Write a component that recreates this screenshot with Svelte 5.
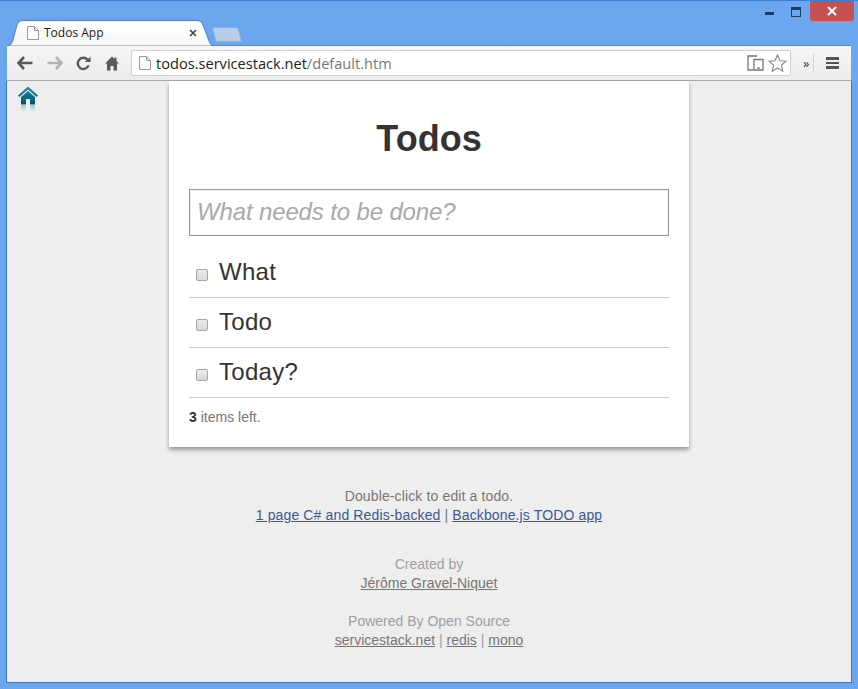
<script>
  const todos = ['What', 'Todo', 'Today?'];
</script>

<div class="window">
  <div class="titlebar">
    <div class="tab">
      <svg class="tab-shape" viewBox="0 0 205 26" preserveAspectRatio="none">
        <path d="M0 26 C3 25 4 23 5 20 L9 5 C10 2 12 0.5 15 0.5 L189 0.5 C192 0.5 194 2 195 5 L201 21 C202 24 203 25 205 26 Z" fill="url(#tabfill)" stroke="#3f6ea8" stroke-width="0.8"/>
        <defs>
          <linearGradient id="tabfill" x1="0" y1="0" x2="0" y2="1">
            <stop offset="0" stop-color="#ffffff"/>
            <stop offset="1" stop-color="#f6f6f6"/>
          </linearGradient>
        </defs>
      </svg>
      <svg class="page-icon" viewBox="0 0 12 14">
        <path d="M0.5 0.5 H7.5 L11.5 4.5 V13.5 H0.5 Z M7.5 0.5 V4.5 H11.5" fill="#fff" stroke="#9a9a9a"/>
      </svg>
      <span class="tab-title">Todos App</span>
      <svg class="tab-close" viewBox="0 0 8 8">
        <path d="M1 1 L7 7 M7 1 L1 7" stroke="#444" stroke-width="1.6"/>
      </svg>
    </div>
    <svg class="new-tab" viewBox="0 0 30 15">
      <path d="M0.5 0.5 H23 C25 0.5 26 1.5 26.5 3 L29.500 14.500 H6 C4.500 14.500 3.800 13.800 3.500 12.500 Z" fill="#b9cfe9" stroke="#8fb2dd"/>
    </svg>
    <div class="controls">
      <span class="minimize"></span>
      <span class="maximize"></span>
      <span class="close">
        <svg viewBox="0 0 10 10" width="10" height="10">
          <path d="M1 1 L9 9 M9 1 L1 9" stroke="#fff" stroke-width="2"/>
        </svg>
      </span>
    </div>
  </div>

  <div class="toolbar">
    <svg class="tool back" viewBox="0 0 16 14">
      <path d="M7 1 L1.500 7 L7 13 M2 7 H15.500" fill="none" stroke="#5a5a5a" stroke-width="2.600"/>
    </svg>
    <svg class="tool forward" viewBox="0 0 16 14">
      <path d="M9 1 L14.500 7 L9 13 M14 7 H0.500" fill="none" stroke="#b4b4b4" stroke-width="2.600"/>
    </svg>
    <svg class="tool reload" viewBox="0 0 16 16">
      <path d="M13.500 10 A6 6 0 1 1 12.500 4" fill="none" stroke="#5a5a5a" stroke-width="2.500"/>
      <path d="M9.500 6.500 H15.500 V0.500 Z" fill="#5a5a5a"/>
    </svg>
    <svg class="tool home" viewBox="0 0 14 15">
      <path d="M7 0.500 L9.500 3 V1.500 H11.500 V5 L14 7.500 H12 V14.500 H8.500 V10 H5.500 V14.500 H2 V7.500 H0 Z" fill="#5a5a5a"/>
    </svg>
    <div class="omnibox">
      <svg class="page-icon" viewBox="0 0 12 14">
        <path d="M0.500 0.500 H7.500 L11.500 4.500 V13.500 H0.500 Z M7.500 0.500 V4.500 H11.500" fill="#fff" stroke="#9a9a9a"/>
      </svg>
      <span class="url">todos.servicestack.net<span class="path">/default.htm</span></span>
      <svg class="reader" viewBox="0 0 17 16">
        <path d="M10 1 H1 V15 H7 V4.500 H16 V15 H7" fill="none" stroke="#777" stroke-width="1.300"/>
        <path d="M10 13 H13" stroke="#777" stroke-width="1.300"/>
      </svg>
      <svg class="star" viewBox="0 0 20 19">
        <path d="M10 1 L12.600 7.100 L19 7.600 L14.100 11.900 L15.600 18.200 L10 14.800 L4.400 18.200 L5.900 11.900 L1 7.600 L7.400 7.100 Z" fill="#fff" stroke="#8a8a8a" stroke-width="1.200"/>
      </svg>
    </div>
    <span class="more">»</span>
    <span class="divider"></span>
    <div class="menu"><span></span><span></span><span></span></div>
  </div>

  <div class="page">
    <svg class="site-home" viewBox="0 0 20 27">
      <defs>
        <linearGradient id="homefill" x1="0" y1="0" x2="0" y2="1">
          <stop offset="0" stop-color="#1d8db0"/>
          <stop offset="1" stop-color="#07506f"/>
        </linearGradient>
        <linearGradient id="homeglow" x1="0" y1="0" x2="0" y2="1">
          <stop offset="0" stop-color="#1d8db0" stop-opacity="0.35"/>
          <stop offset="1" stop-color="#1d8db0" stop-opacity="0"/>
        </linearGradient>
      </defs>
      <path d="M10 0.500 L20 9.500 L18.600 11 L10 3.400 L1.400 11 L0 9.500 Z M10 5 L17 11 V18.500 H12 V13 H8 V18.500 H3 V11 Z" fill="url(#homefill)"/>
      <path d="M3 19 H8 V26 H3 Z M12 19 H17 V26 H12 Z" fill="url(#homeglow)"/>
    </svg>

    <section class="card">
      <h1>Todos</h1>
      <div class="new-todo">What needs to be done?</div>
      <ul>
        {#each todos as todo}
          <li>
            <input type="checkbox" tabindex="-1" />
            <span>{todo}</span>
          </li>
        {/each}
      </ul>
      <p class="count"><b>3</b> items left.</p>
    </section>

    <footer>
      <p class="help">
        Double-click to edit a todo.<br />
        <a href="#a">1 page C# and Redis-backed</a> | <a href="#b">Backbone.js TODO app</a>
      </p>
      <p class="credits">
        Created by<br />
        <a href="#c">Jérôme Gravel-Niquet</a>
      </p>
      <p class="credits second">
        Powered By Open Source<br />
        <a href="#d">servicestack.net</a> | <a href="#e">redis</a> | <a href="#f">mono</a>
      </p>
    </footer>
  </div>
</div>

<style>
  :global(body) {
    margin: 0;
    background: #6ba6ee;
  }

  .window {
    width: 858px;
    height: 689px;
    box-sizing: border-box;
    padding: 0 7px 6px;
    display: flex;
    flex-direction: column;
    background: #6ba6ee;
    border-top: 1px solid #3d7fd0;
    font-family: "Liberation Sans", Arial, sans-serif;
    overflow: hidden;
  }

  .titlebar {
    height: 44px;
    flex: none;
    display: flex;
    align-items: flex-end;
    position: relative;
    z-index: 1;
  }

  .tab {
    position: relative;
    width: 205px;
    height: 25px;
    margin-left: 1px;
    display: flex;
    align-items: center;
    box-sizing: border-box;
    padding: 0 16px 0 19px;
    font-family: "Open Sans", "Noto Sans", sans-serif;
    font-size: 12px;
    color: #222;
  }

  .tab-shape {
    position: absolute;
    inset: 0 0 -1px 0;
    width: 100%;
    height: 26px;
  }

  .tab .page-icon {
    position: relative;
    margin-right: 5px;
  }

  .tab-title {
    position: relative;
    flex: 1;
  }

  .tab-close {
    position: relative;
    width: 8px;
    height: 8px;
  }

  .page-icon {
    width: 12px;
    height: 14px;
    flex: none;
  }

  .new-tab {
    width: 30px;
    height: 15px;
    margin: 0 0 3px -1px;
  }

  .controls {
    position: absolute;
    top: -1px;
    right: -3px;
    display: flex;
    align-items: flex-start;
  }

  .minimize {
    width: 9px;
    height: 3px;
    background: #1c3a63;
    margin: 12px 17px 0 0;
  }

  .maximize {
    width: 8px;
    height: 6px;
    border: 1px solid #1c3a63;
    border-top-width: 3px;
    margin: 7px 9px 0 0;
  }

  .close {
    width: 44px;
    height: 21px;
    background: #c75050;
    border-radius: 0 0 3px 3px;
    display: flex;
    align-items: center;
    justify-content: center;
  }

  .toolbar {
    height: 36px;
    flex: none;
    box-sizing: border-box;
    display: flex;
    align-items: center;
    padding: 0 10px 0 10px;
    background: linear-gradient(#f6f6f6, #ececec);
    border-top: 1px solid #5a86bd;
    border-bottom: 1px solid #a8a8a8;
  }

  .tool {
    flex: none;
  }

  .back,
  .forward {
    width: 16px;
    height: 14px;
  }

  .back {
    margin-right: 14px;
  }

  .forward {
    margin-right: 13px;
  }

  .reload {
    width: 15px;
    height: 15px;
    margin-right: 14px;
  }

  .home {
    width: 14px;
    height: 15px;
    margin-right: 12px;
  }

  .omnibox {
    width: 660px;
    height: 26px;
    flex: none;
    box-sizing: border-box;
    display: flex;
    align-items: center;
    padding: 0 3px 0 7px;
    background: #fff;
    border: 1px solid #d0d0d0;
    border-radius: 2px;
  }

  .url {
    flex: 1;
    margin-left: 5px;
    font-family: "Open Sans", "Noto Sans", sans-serif;
    font-size: 14.6px;
    color: #222;
  }

  .path {
    color: #777;
  }

  .reader {
    width: 17px;
    height: 16px;
    margin-right: 4px;
  }

  .star {
    width: 19px;
    height: 18px;
  }

  .more {
    margin-left: 12px;
    font-family: "Open Sans", sans-serif;
    font-size: 13px;
    color: #333;
  }

  .divider {
    width: 1px;
    height: 18px;
    margin-left: 4px;
    background: #d2d2d2;
  }

  .menu {
    width: 13px;
    margin-left: 12px;
    display: flex;
    flex-direction: column;
    gap: 2px;
  }

  .menu span {
    height: 2.500px;
    background: #555;
  }

  .page {
    flex: 1;
    position: relative;
    background: #eeeeee;
    border-bottom: 1px solid #3d74b4;
    box-shadow: -1px 0 0 #3f78bd, 1px 0 0 #3f78bd;
    display: flex;
    flex-direction: column;
    align-items: center;
  }

  .site-home {
    position: absolute;
    top: 5px;
    left: 11px;
    width: 20px;
    height: 27px;
  }

  .card {
    width: 520px;
    height: 366px;
    box-sizing: border-box;
    flex: none;
    padding: 0 20px;
    background: #fff;
    box-shadow: 0 3px 4px rgba(0, 0, 0, 0.35);
  }

  h1 {
    margin: 0;
    padding-top: 36px;
    font-size: 36px;
    line-height: 44px;
    font-weight: bold;
    color: #333;
    text-align: center;
  }

  .new-todo {
    width: 480px;
    height: 47px;
    margin-top: 28px;
    box-sizing: border-box;
    padding: 0 7px;
    border: 1px solid #999;
    box-shadow: inset 0 0 1px #888;
    font-size: 24px;
    font-style: italic;
    line-height: 44px;
    letter-spacing: -0.14px;
    color: #a9a9a9;
  }

  ul {
    list-style: none;
    margin: 12px 0 0;
    padding: 0;
  }

  li {
    height: 50px;
    box-sizing: border-box;
    padding-bottom: 2px;
    display: flex;
    align-items: center;
    border-bottom: 1px solid #ccc;
    font-size: 24px;
    letter-spacing: 0.3px;
    color: #333;
  }

  li input {
    appearance: none;
    width: 12px;
    height: 12px;
    margin: 6px 11px 0 7px;
    box-sizing: border-box;
    border: 1px solid #a6a6a6;
    border-radius: 2px;
    background: linear-gradient(#ececec, #d8d8d8);
  }

  .count {
    margin: 11px 0 0;
    font-size: 14px;
    line-height: 17px;
    color: #777;
  }

  .count b {
    color: #333;
  }

  footer {
    margin-top: 40px;
    font-size: 14px;
    line-height: 19px;
    text-align: center;
    color: #777;
  }

  footer p {
    margin: 0;
  }

  .help {
    letter-spacing: 0.13px;
  }

  footer a {
    color: #3b5998;
  }

  .credits {
    margin-top: 30px;
    color: #a0a0a0;
  }

  .credits.second {
    margin-top: 19px;
  }

  .credits a {
    color: #777;
  }
</style>
